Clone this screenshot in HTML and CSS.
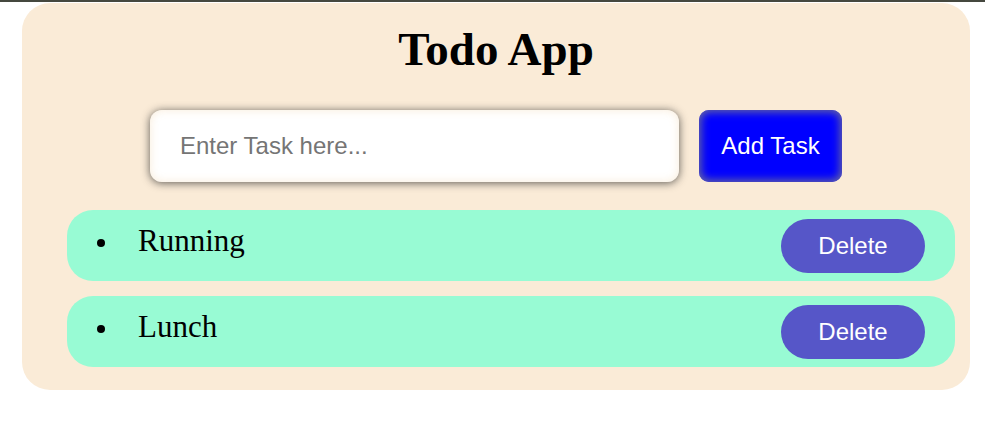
FILE: index.html
```html
<!DOCTYPE html>
<html lang="en">
<head>
<meta charset="utf-8">
<title>Todo App</title>
<link rel="stylesheet" href="styles.css">
</head>
<body>
<div class="topbar"></div>
<div class="app">
  <h1 class="title">Todo App</h1>
  <div class="entry">
    <input class="task-input" type="text" placeholder="Enter Task here...">
    <button class="add-btn">Add Task</button>
  </div>
  <ul class="tasks">
    <li class="task"><span class="dot"></span><span class="task-text">Running</span><button class="del-btn">Delete</button></li>
    <li class="task"><span class="dot"></span><span class="task-text">Lunch</span><button class="del-btn">Delete</button></li>
  </ul>
</div>
</body>
</html>
```
FILE: styles.css
```css
html, body {
  margin: 0;
  padding: 0;
  background: #ffffff;
  font-family: "Liberation Serif", "Times New Roman", serif;
}
.topbar {
  height: 2px;
  background: #45483f;
}
.app {
  margin: 1px 15px 0 22px;
  background: #faebd7;
  border-radius: 28px;
  padding: 20px 15px 23px 45px;
}
.title {
  margin: 0 0 0 -30px;
  font-size: 47px;
  line-height: 53px;
  font-weight: bold;
  text-align: center;
  color: #000;
}
.entry {
  display: flex;
  justify-content: center;
  gap: 20px;
  margin: 34px 0 0 -30px;
}
.task-input {
  box-sizing: border-box;
  width: 529px;
  height: 72px;
  border: none;
  border-radius: 12px;
  padding: 0 30px;
  font-family: "Liberation Sans", Arial, sans-serif;
  font-size: 24px;
  color: #222;
  background: #fff;
  box-shadow: 0 1px 8px rgba(40, 40, 40, 0.75), inset 0 0 10px rgba(250, 235, 215, 0.9);
  outline: none;
}
.task-input::placeholder {
  color: #757575;
}
.add-btn {
  box-sizing: border-box;
  width: 143px;
  height: 72px;
  border: none;
  border-radius: 10px;
  background: #0000ff;
  color: #fff;
  font-family: "Liberation Sans", Arial, sans-serif;
  font-size: 24px;
  box-shadow: inset 0 0 8px 2px #6a6a9a;
  padding: 0;
}
.tasks {
  list-style: none;
  margin: 28px 0 0 0;
  padding: 0;
  display: flex;
  flex-direction: column;
  gap: 15px;
}
.task {
  height: 71px;
  box-sizing: border-box;
  background: #98fbd4;
  border-radius: 26px;
  display: flex;
  align-items: center;
  padding: 0 30px 0 30px;
}
.dot {
  width: 8px;
  height: 8px;
  border-radius: 50%;
  background: #000;
  margin-bottom: 6px;
  flex: none;
}
.task-text {
  font-size: 31px;
  line-height: 34px;
  margin-left: 33px;
  margin-bottom: 10px;
  color: #000;
}
.del-btn {
  margin-left: auto;
  width: 144px;
  height: 54px;
  border: none;
  border-radius: 27px;
  background: #5656c8;
  color: #fff;
  font-family: "Liberation Sans", Arial, sans-serif;
  font-size: 24px;
  padding: 0;
}
```
